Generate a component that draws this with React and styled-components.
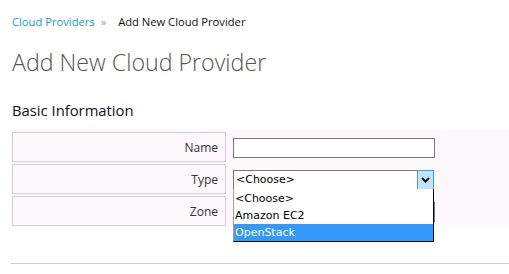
import styled, { createGlobalStyle } from "styled-components";

const GlobalStyle = createGlobalStyle`
  body {
    margin: 0;
    background: #ffffff;
    font-family: "Open Sans", "Noto Sans", sans-serif;
  }
`;

const Page = styled.div`
  width: 509px;
  height: 274px;
  overflow: hidden;
  padding-left: 12px;
  box-sizing: border-box;
`;

const Breadcrumb = styled.nav`
  display: flex;
  align-items: center;
  padding-top: 14px;
  height: 16px;
  line-height: 16px;
  font-size: 11.2px;
`;

const Crumb = styled.a`
  color: #1a9ad6;
  text-decoration: none;
`;

const Separator = styled.span`
  color: #9a9a9a;
  margin: 0 12px 0 6px;
  font-size: 11px;
`;

const Current = styled.span`
  color: #111;
`;

const Title = styled.h1`
  margin: 17px 0 0;
  font-size: 23.2px;
  line-height: 30px;
  font-weight: 300;
  color: #555;
`;

const Section = styled.h2`
  margin: 23px 0 0;
  font-size: 14.8px;
  line-height: 20px;
  font-weight: 400;
  color: #111;
`;

const FormTable = styled.div`
  margin-top: 10px;
  display: grid;
  grid-template-columns: 214px 1fr;
  column-gap: 2px;
  row-gap: 2px;
  padding: 2px 0 1px;
  background: #fdf8fc;
`;

const LabelCell = styled.div`
  height: 30px;
  box-sizing: border-box;
  border: 1px solid #cfcfcf;
  background: #fdf8fc;
  display: flex;
  align-items: center;
  justify-content: flex-end;
  padding-right: 7px;
  font-size: 12px;
  color: #333;
`;

const ValueCell = styled.div`
  display: flex;
  align-items: center;
  padding: 1px 0 0 5px;
  position: relative;
  z-index: ${(p) => (p.$raised ? 2 : 1)};
`;

const TextInput = styled.input`
  width: 202px;
  height: 20px;
  box-sizing: border-box;
  border: 1px solid #7a7a7a;
  background: #fff;
  margin: 0;
  padding: 0 3px;
  outline: none;
`;

const Combo = styled.div`
  position: relative;
  width: 201px;
  height: 20px;
  box-sizing: border-box;
  border: 1px solid #7a7a7a;
  background: #fff;
  display: flex;
  align-items: center;
  font-family: "DejaVu Sans", sans-serif;
  font-size: 11px;
  color: #000;
`;

const ComboText = styled.span`
  flex: 1;
  padding-left: 2px;
`;

const ArrowBox = styled.span`
  width: 17px;
  height: 20px;
  margin: -1px -1px -1px 0;
  box-sizing: border-box;
  border: 1px solid #3c9dd8;
  background: #bfe5fc;
  display: flex;
  align-items: center;
  justify-content: center;
`;

const List = styled.ul`
  position: absolute;
  top: 18px;
  left: -1px;
  width: 201px;
  margin: 0;
  padding: 1px 0 0;
  list-style: none;
  box-sizing: border-box;
  background: #fff;
  border-left: 1px solid #a0a0a0;
  border-right: 1px solid #000;
  border-bottom: 1px solid #000;
`;

const Option = styled.li`
  height: 17px;
  line-height: 17px;
  padding-left: 1px;
  background: ${(p) => (p.$active ? "#3399ff" : "transparent")};
  color: ${(p) => (p.$active ? "#fff" : "#000")};
`;

const Rule = styled.hr`
  margin: 36px 0 0 -1px;
  border: 0;
  border-top: 1px solid #cfcfcf;
`;

const options = ["<Choose>", "Amazon EC2", "OpenStack"];

export default function App() {
  return (
    <Page>
      <GlobalStyle />
      <Breadcrumb>
        <Crumb href="#">Cloud Providers</Crumb>
        <Separator>»</Separator>
        <Current>Add New Cloud Provider</Current>
      </Breadcrumb>
      <Title>Add New Cloud Provider</Title>
      <Section>Basic Information</Section>
      <FormTable>
        <LabelCell>Name</LabelCell>
        <ValueCell>
          <TextInput type="text" />
        </ValueCell>
        <LabelCell>Type</LabelCell>
        <ValueCell $raised>
          <Combo>
            <ComboText>&lt;Choose&gt;</ComboText>
            <ArrowBox>
              <svg width="9" height="6" viewBox="0 0 9 6">
                <path d="M1 1 L4.5 4.5 L8 1" fill="none" stroke="#111" strokeWidth="2" />
              </svg>
            </ArrowBox>
            <List>
              {options.map((o) => (
                <Option key={o} $active={o === "OpenStack"}>
                  {o}
                </Option>
              ))}
            </List>
          </Combo>
        </ValueCell>
        <LabelCell>Zone</LabelCell>
        <ValueCell>
          <TextInput type="text" />
        </ValueCell>
      </FormTable>
      <Rule />
    </Page>
  );
}
